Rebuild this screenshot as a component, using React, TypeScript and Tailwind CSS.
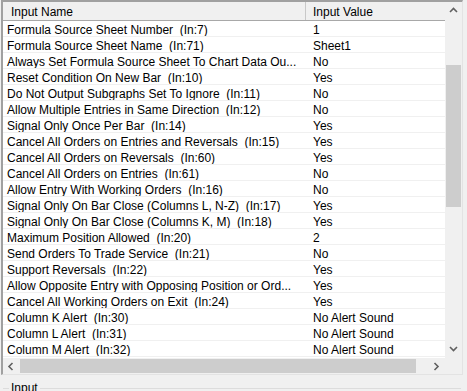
import React from 'react';

// Grid of study inputs: name + value, Win32 list view look.
const rows: [string, string][] = [
  ['Formula Source Sheet Number  (In:7)', '1'],
  ['Formula Source Sheet Name  (In:71)', 'Sheet1'],
  ['Always Set Formula Source Sheet To Chart Data Ou...', 'No'],
  ['Reset Condition On New Bar  (In:10)', 'Yes'],
  ['Do Not Output Subgraphs Set To Ignore  (In:11)', 'No'],
  ['Allow Multiple Entries in Same Direction  (In:12)', 'No'],
  ['Signal Only Once Per Bar  (In:14)', 'Yes'],
  ['Cancel All Orders on Entries and Reversals  (In:15)', 'Yes'],
  ['Cancel All Orders on Reversals  (In:60)', 'Yes'],
  ['Cancel All Orders on Entries  (In:61)', 'No'],
  ['Allow Entry With Working Orders  (In:16)', 'No'],
  ['Signal Only On Bar Close (Columns L, N-Z)  (In:17)', 'Yes'],
  ['Signal Only On Bar Close (Columns K, M)  (In:18)', 'Yes'],
  ['Maximum Position Allowed  (In:20)', '2'],
  ['Send Orders To Trade Service  (In:21)', 'No'],
  ['Support Reversals  (In:22)', 'Yes'],
  ['Allow Opposite Entry with Opposing Position or Ord...', 'Yes'],
  ['Cancel All Working Orders on Exit  (In:24)', 'Yes'],
  ['Column K Alert  (In:30)', 'No Alert Sound'],
  ['Column L Alert  (In:31)', 'No Alert Sound'],
  ['Column M Alert  (In:32)', 'No Alert Sound'],
];

function Chevron({ dir }: { dir: 'up' | 'down' | 'left' | 'right' }) {
  const pts = {
    up: '1,5 4.5,1.5 8,5',
    down: '1,2 4.5,5.5 8,2',
    left: '5.5,1 2,4.5 5.5,8',
    right: '2.5,1 6,4.5 2.5,8',
  }[dir];
  return (
    <svg width="9" height="9" viewBox="0 0 9 9">
      <polyline points={pts} fill="none" stroke="#606060" strokeWidth="1.6" />
    </svg>
  );
}

export default function App() {
  return (
    <div
      className="relative h-[391px] w-[467px] overflow-hidden bg-[#f0f0f0] text-[12px] leading-[16px] text-black"
      style={{ fontFamily: '"Liberation Sans", Arial, sans-serif' }}
    >
      <div className="ml-px flex h-[375px] w-[462px] flex-col border-t-2 border-r border-b border-l-2 border-t-[#a0a0a0] border-r-[#e3e3e3] border-b-[#e3e3e3] border-l-[#a0a0a0]">
        <div className="flex flex-1 overflow-hidden">
          <div className="flex w-[442px] flex-col bg-white">
            <div className="flex h-[19px] shrink-0 border-b border-[#a8a8a8] bg-[#f0f0f0]">
              <div className="w-[303px] shrink-0 border-r border-[#c8c8c8] pt-[2px] pl-2">Input Name</div>
              <div className="flex-1 pt-[2px] pl-[7px]">Input Value</div>
            </div>
            {rows.map(([name, value]) => (
              <div key={name} className="flex h-4 shrink-0 border-b border-[#f0f0f0] pt-[2px] leading-[14px]">
                <div className="w-[303px] shrink-0 overflow-hidden pl-1 whitespace-pre">{name}</div>
                <div className="flex-1 overflow-hidden pl-[7px] whitespace-pre">{value}</div>
              </div>
            ))}
          </div>
          <div className="flex w-[17px] flex-col bg-[#f0f0f0]">
            <div className="flex h-[18px] items-center justify-center">
              <Chevron dir="up" />
            </div>
            <div className="mx-px mt-[45px] h-[142px] bg-[#cdcdcd]" />
            <div className="flex-1" />
            <div className="flex h-[17px] items-center justify-center">
              <Chevron dir="down" />
            </div>
          </div>
        </div>
        <div className="flex h-[16px] shrink-0 bg-[#f0f0f0]">
          <div className="flex w-[17px] items-center justify-center">
            <Chevron dir="left" />
          </div>
          <div className="my-px w-[396px] bg-[#cdcdcd]" />
          <div className="flex-1" />
          <div className="flex w-[17px] items-center justify-center">
            <Chevron dir="right" />
          </div>
          <div className="w-[17px]" />
        </div>
      </div>
      <div className="mt-[6px] ml-[3px] flex h-[20px] w-[458px] items-start">
        <div className="mt-[7px] w-[6px] border-t border-[#dcdcdc]" />
        <div className="px-[2px] leading-[14px]">Input</div>
        <div className="mt-[7px] flex-1 border-t border-[#dcdcdc]" />
      </div>
    </div>
  );
}
